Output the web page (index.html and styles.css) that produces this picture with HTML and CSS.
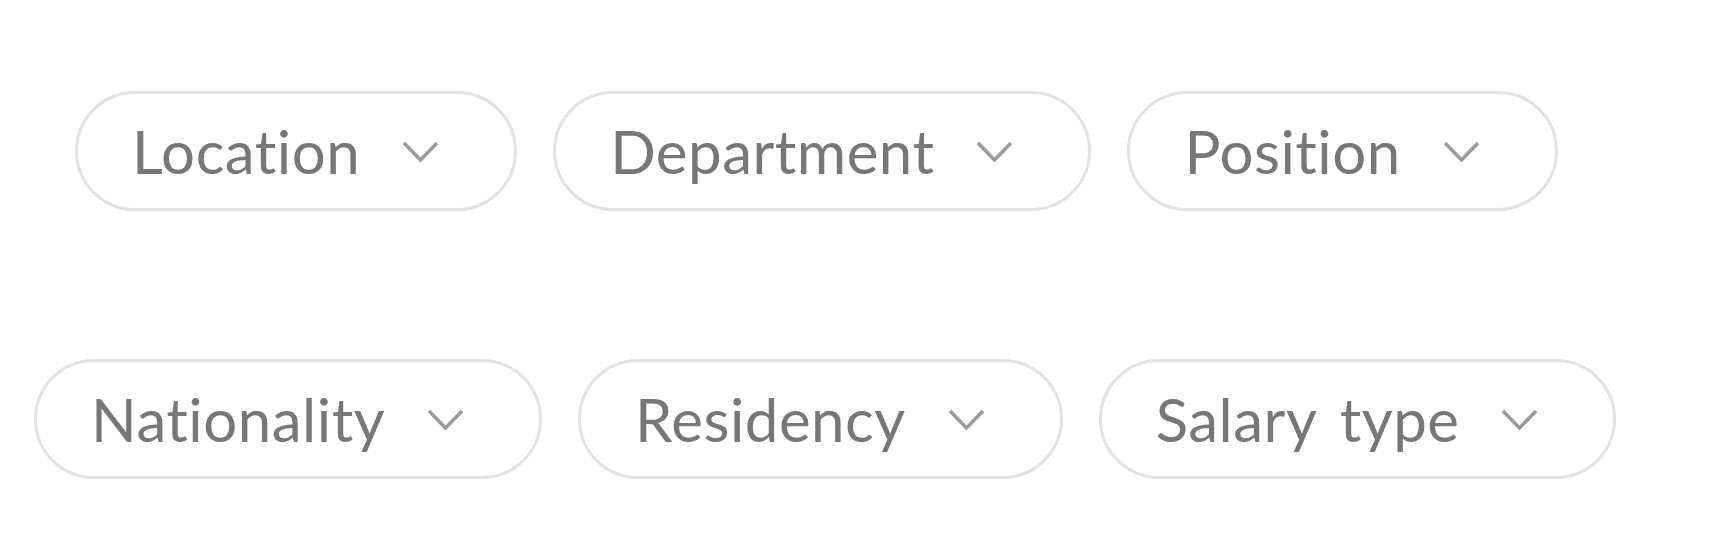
FILE: index.html
```html
<!DOCTYPE html>
<html lang="en">

<head>
  <meta charset="UTF-8">
  <title>Filters</title>
  <link rel="stylesheet" href="styles.css">
</head>

<body>
  <div class="filters">
    <div class="filter-row row-top">
      <button class="pill" type="button">
        <span class="pill-label">Location</span>
        <svg class="chevron" viewBox="0 0 37 21"><path d="M2 2 L18.5 19 L35 2" /></svg>
      </button>
      <button class="pill" type="button">
        <span class="pill-label">Department</span>
        <svg class="chevron" viewBox="0 0 37 21"><path d="M2 2 L18.5 19 L35 2" /></svg>
      </button>
      <button class="pill" type="button">
        <span class="pill-label">Position</span>
        <svg class="chevron" viewBox="0 0 37 21"><path d="M2 2 L18.5 19 L35 2" /></svg>
      </button>
    </div>

    <div class="filter-row row-bottom">
      <button class="pill" type="button">
        <span class="pill-label">Nationality</span>
        <svg class="chevron" viewBox="0 0 37 21"><path d="M2 2 L18.5 19 L35 2" /></svg>
      </button>
      <button class="pill" type="button">
        <span class="pill-label">Residency</span>
        <svg class="chevron" viewBox="0 0 37 21"><path d="M2 2 L18.5 19 L35 2" /></svg>
      </button>
      <button class="pill" type="button">
        <span class="pill-label">Salary type</span>
        <svg class="chevron" viewBox="0 0 37 21"><path d="M2 2 L18.5 19 L35 2" /></svg>
      </button>
    </div>
  </div>
</body>

</html>
```

FILE: styles.css
```css
body {
  font-family: 'Lato', 'Open Sans', sans-serif;
  background-color: #fff;
  margin: 0;
  padding: 0;
}

*,
*:before,
*:after {
  box-sizing: border-box;
}

.filters {
  display: flex;
  flex-direction: column;
  gap: 148px;
  padding-top: 91px;
}

.filter-row {
  display: flex;
  gap: 36px;
}

.row-top {
  padding-left: 75px;
}

.row-bottom {
  padding-left: 34px;
}

.pill {
  display: flex;
  align-items: center;
  height: 120px;
  padding: 0 75px 0 54px;
  background: #fff;
  border: 3px solid #e2e2e2;
  border-radius: 60px;
  font-family: inherit;
  cursor: pointer;
}

.pill-label {
  font-size: 60px;
  color: #777;
  line-height: 1;
  font-variant-ligatures: none;
  letter-spacing: 0.5px;
  word-spacing: 8px;
}

.chevron {
  width: 37px;
  height: 21px;
  margin-left: 42px;
  fill: none;
  stroke: #9a9a9a;
  stroke-width: 3.5;
}
```
